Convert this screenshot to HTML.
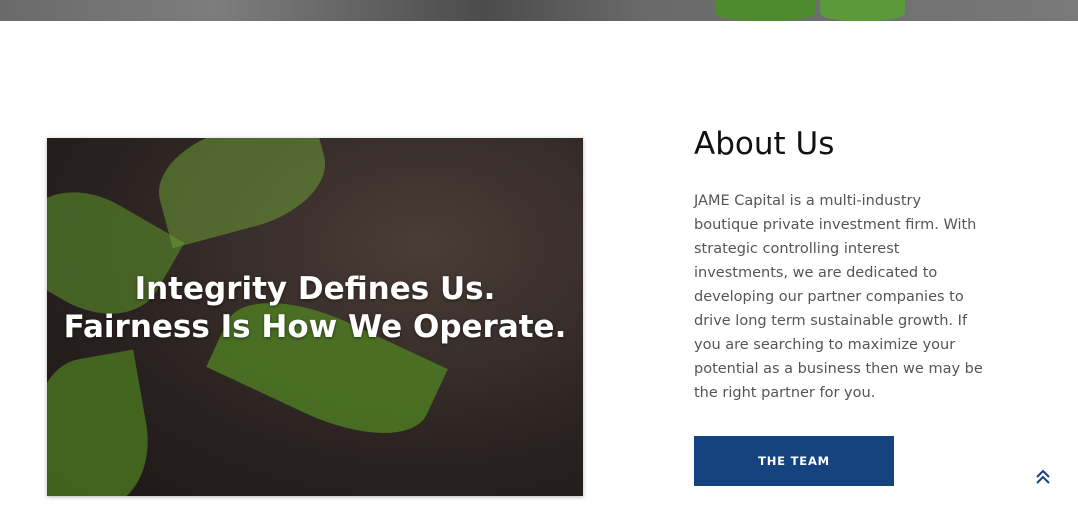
<!DOCTYPE html>
<html><head><style>
*{margin:0;padding:0;box-sizing:border-box}
body{width:1078px;height:520px;background:#fff;position:relative;overflow:hidden;font-family:"DejaVu Sans","Liberation Sans",sans-serif}
.top{position:absolute;left:0;top:0;width:1078px;height:21px;background:linear-gradient(90deg,#6a6a6a,#7d7d7d 20%,#4c4c4c 45%,#6a6a6a 60%,#6f6f6f 80%,#7a7a7a)}
.leaf{position:absolute;top:0;height:21px;background:#4e8a2e;border-radius:0 0 40% 40%}
.img{position:absolute;left:47px;top:138px;width:536px;height:358px;overflow:hidden;background:radial-gradient(ellipse at 70% 30%,#4a3d37,#2a2220 60%,#1c1614);box-shadow:0 1px 4px rgba(0,0,0,.3)}
.img .l{position:absolute;background:#5a8e2a;border-radius:50% 0 50% 0}
.img h2{position:absolute;left:0;right:0;top:132px;text-align:center;color:#fff;font-weight:bold;font-size:31px;line-height:38px;text-shadow:0 1px 3px rgba(0,0,0,.5)}
h1{position:absolute;left:694px;top:126px;font-weight:normal;font-size:31px;color:#111}
p{position:absolute;left:694px;top:189px;width:340px;font-size:14.5px;line-height:24px;color:#555;white-space:nowrap}
.btn{position:absolute;left:694px;top:436px;width:200px;height:50px;background:#15437f;color:#fff;font-size:11.5px;font-weight:bold;letter-spacing:.8px;text-align:center;line-height:50px}
</style></head><body>
<div class="top"></div>
<div class="leaf" style="left:715px;width:100px"></div>
<div class="leaf" style="left:820px;width:85px;background:#5b9a3a"></div>
<div class="img">
<div class="l" style="left:-30px;top:60px;width:150px;height:110px;transform:rotate(30deg);opacity:.6"></div>
<div class="l" style="left:110px;top:-10px;width:170px;height:100px;transform:rotate(-15deg);background:#6a9a35;opacity:.55"></div>
<div class="l" style="left:170px;top:180px;width:220px;height:100px;transform:rotate(25deg);background:#4f7f22;opacity:.8"></div>
<div class="l" style="left:-10px;top:220px;width:110px;height:150px;transform:rotate(-10deg);background:#4c7c20;opacity:.75"></div>
<h2>Integrity Defines Us.<br>Fairness Is How We Operate.</h2>
</div>
<h1>About Us</h1>
<p>JAME Capital is a multi-industry<br>boutique private investment firm. With<br>strategic controlling interest<br>investments, we are dedicated to<br>developing our partner companies to<br>drive long term sustainable growth. If<br>you are searching to maximize your<br>potential as a business then we may be<br>the right partner for you.</p>
<div class="btn">THE TEAM</div>
<svg style="position:absolute;left:1035px;top:469px" width="16" height="16" viewBox="0 0 16 16"><path d="M2 8L8 2L14 8M2 14L8 8L14 14" fill="none" stroke="#15437f" stroke-width="2"/></svg>
</body></html>
